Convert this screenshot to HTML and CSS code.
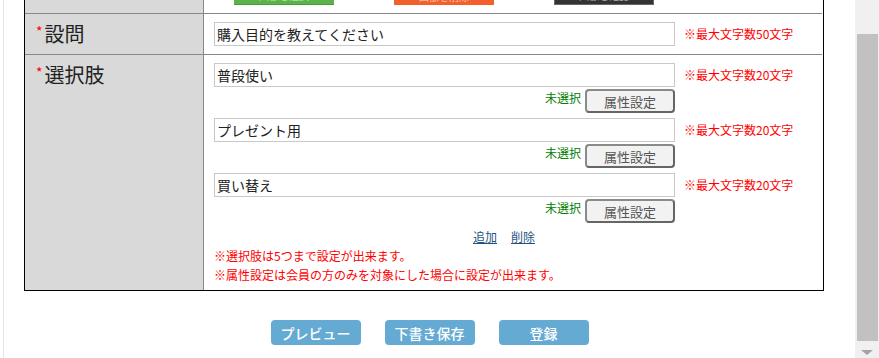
FILE: index.html
```html
<!DOCTYPE html>
<html lang="ja">
<head>
  <meta charset="UTF-8">
  <meta name="viewport" content="width=device-width, initial-scale=1.0">
  <title>アンケート設定</title>

  <link rel="stylesheet" href="styles.css">
</head>
<body>

  <div class="page">
    <div class="form">

      <div class="label-cell top-row"></div>
      <div class="value-cell top-row">
        <span class="mini-btn green">画像を選択</span>
        <span class="mini-btn orange">画像を削除</span>
        <span class="mini-btn dark">画像を確認</span>
      </div>

      <div class="label-cell"><span class="req">*</span>設問</div>
      <div class="value-cell">
        <div class="field">
          <input type="text" class="text-input" value="購入目的を教えてください">
          <span class="note">※最大文字数50文字</span>
        </div>
      </div>

      <div class="label-cell"><span class="req">*</span>選択肢</div>
      <div class="value-cell">
        <div class="choice">
          <div class="field">
            <input type="text" class="text-input" value="普段使い">
            <span class="note">※最大文字数20文字</span>
          </div>
          <div class="attr">
            <span class="attr-status">未選択</span>
            <button class="attr-btn">属性設定</button>
          </div>
        </div>

        <div class="choice">
          <div class="field">
            <input type="text" class="text-input" value="プレゼント用">
            <span class="note">※最大文字数20文字</span>
          </div>
          <div class="attr">
            <span class="attr-status">未選択</span>
            <button class="attr-btn">属性設定</button>
          </div>
        </div>

        <div class="choice">
          <div class="field">
            <input type="text" class="text-input" value="買い替え">
            <span class="note">※最大文字数20文字</span>
          </div>
          <div class="attr">
            <span class="attr-status">未選択</span>
            <button class="attr-btn">属性設定</button>
          </div>
        </div>

        <div class="links">
          <a href="#">追加</a>
          <a href="#">削除</a>
        </div>

        <p class="caution">※選択肢は5つまで設定が出来ます。</p>
        <p class="caution">※属性設定は会員の方のみを対象にした場合に設定が出来ます。</p>
      </div>

    </div>

    <div class="actions">
      <button class="action-btn">プレビュー</button>
      <button class="action-btn">下書き保存</button>
      <button class="action-btn">登録</button>
    </div>
  </div>

  <div class="scrollbar">
    <div class="scroll-thumb"></div>
    <div class="scroll-arrow"></div>
  </div>

</body>
</html>
```

FILE: styles.css
```css
body {
  display: flex;
  height: 358px;
  margin: 0;
  overflow: hidden;
  background-color: #fff;
  font-family: "Noto Sans CJK JP", "Liberation Sans", sans-serif;
  color: #333;
}

.page {
  flex: 1;
  margin-left: 3px;
  border-left: 1px solid #e4e4e4;
  padding-left: 20px;
}

.form {
  display: grid;
  grid-template-columns: 179px 618px;
  width: 798px;
  border: 1px solid #000;
  border-top: none;
}

.label-cell {
  background-color: #d9d9d9;
  border-right: 1px solid #888;
  border-top: 1px solid #888;
  padding: 8px 0 0 11px;
  font-size: 20px;
  line-height: 24px;
  color: #222;
}

.value-cell {
  border-top: 1px solid #888;
  padding: 8px 0 0 10px;
}

.top-row {
  border-top: none;
  height: 13px;
  box-sizing: border-box;
}

.value-cell.top-row {
  display: flex;
  align-items: flex-end;
  gap: 60px;
  padding: 0 0 8px 30px;
  overflow: hidden;
}

.req {
  display: inline-block;
  vertical-align: top;
  margin-right: 2px;
  color: #f00;
  font-size: 14px;
  line-height: 18px;
}

.mini-btn {
  display: flex;
  align-items: flex-end;
  justify-content: center;
  flex: none;
  width: 100px;
  height: 30px;
  box-sizing: border-box;
  padding-bottom: 3px;
  color: rgba(255, 255, 255, 0.6);
  font-size: 10px;
  line-height: 10px;
}

.green {
  background-color: #5bb249;
  border-bottom: 1px solid #4a9b3a;
}

.orange {
  background-color: #f2612b;
}

.dark {
  background-color: #333;
  border: 1px solid #666;
  border-top: none;
}

.field {
  display: flex;
  align-items: center;
  gap: 9px;
  margin-bottom: 8px;
}

.text-input {
  width: 461px;
  height: 24px;
  box-sizing: border-box;
  margin: 0;
  padding: 0 2px;
  border: 1px solid #c9c9c9;
  font-family: inherit;
  font-size: 14px;
  color: #222;
}

.note {
  color: #f00;
  font-size: 12px;
  line-height: 16px;
}

.choice .field {
  margin-bottom: 2px;
}

.choice {
  margin-bottom: 5px;
}

.attr {
  display: flex;
  justify-content: flex-end;
  align-items: flex-start;
  gap: 4px;
  width: 461px;
}

.attr-status {
  margin-top: 1px;
  color: #008000;
  font-size: 12px;
  line-height: 16px;
}

.attr-btn {
  width: 90px;
  height: 24px;
  box-sizing: border-box;
  padding: 0;
  border: 2px solid #666;
  border-top-color: #8a8a8a;
  border-left-color: #8a8a8a;
  border-radius: 4px;
  background-color: #f2f2f2;
  font-family: inherit;
  font-size: 13px;
  color: #555;
}

.links {
  display: flex;
  gap: 14px;
  padding-left: 259px;
  margin-top: 1px;
  font-size: 12px;
  line-height: 18px;
}

.links a {
  color: #1f5480;
}

.caution {
  margin: 0;
  color: #f00;
  font-size: 12px;
  line-height: 19px;
}

.caution:last-child {
  margin-bottom: 6px;
}

.actions {
  display: flex;
  justify-content: center;
  gap: 24px;
  width: 851px;
  margin: 29px 0 0 -20px;
}

.action-btn {
  width: 90px;
  height: 25px;
  padding: 0;
  border: none;
  border-radius: 4px;
  background-color: #65aad3;
  font-family: inherit;
  font-size: 14px;
  font-weight: 500;
  color: #fff;
}

.scrollbar {
  display: flex;
  flex-direction: column;
  width: 24px;
  padding-top: 34px;
  box-sizing: border-box;
  background-color: #f0f0f0;
}

.scroll-thumb {
  flex: 1;
  margin: 0 1px 0 2px;
  background-color: #c1c1c1;
}

.scroll-arrow {
  align-self: center;
  width: 0;
  height: 0;
  margin: 9px 0 3px;
  border-left: 6px solid transparent;
  border-right: 6px solid transparent;
  border-top: 5px solid #a3a3a3;
}
```
